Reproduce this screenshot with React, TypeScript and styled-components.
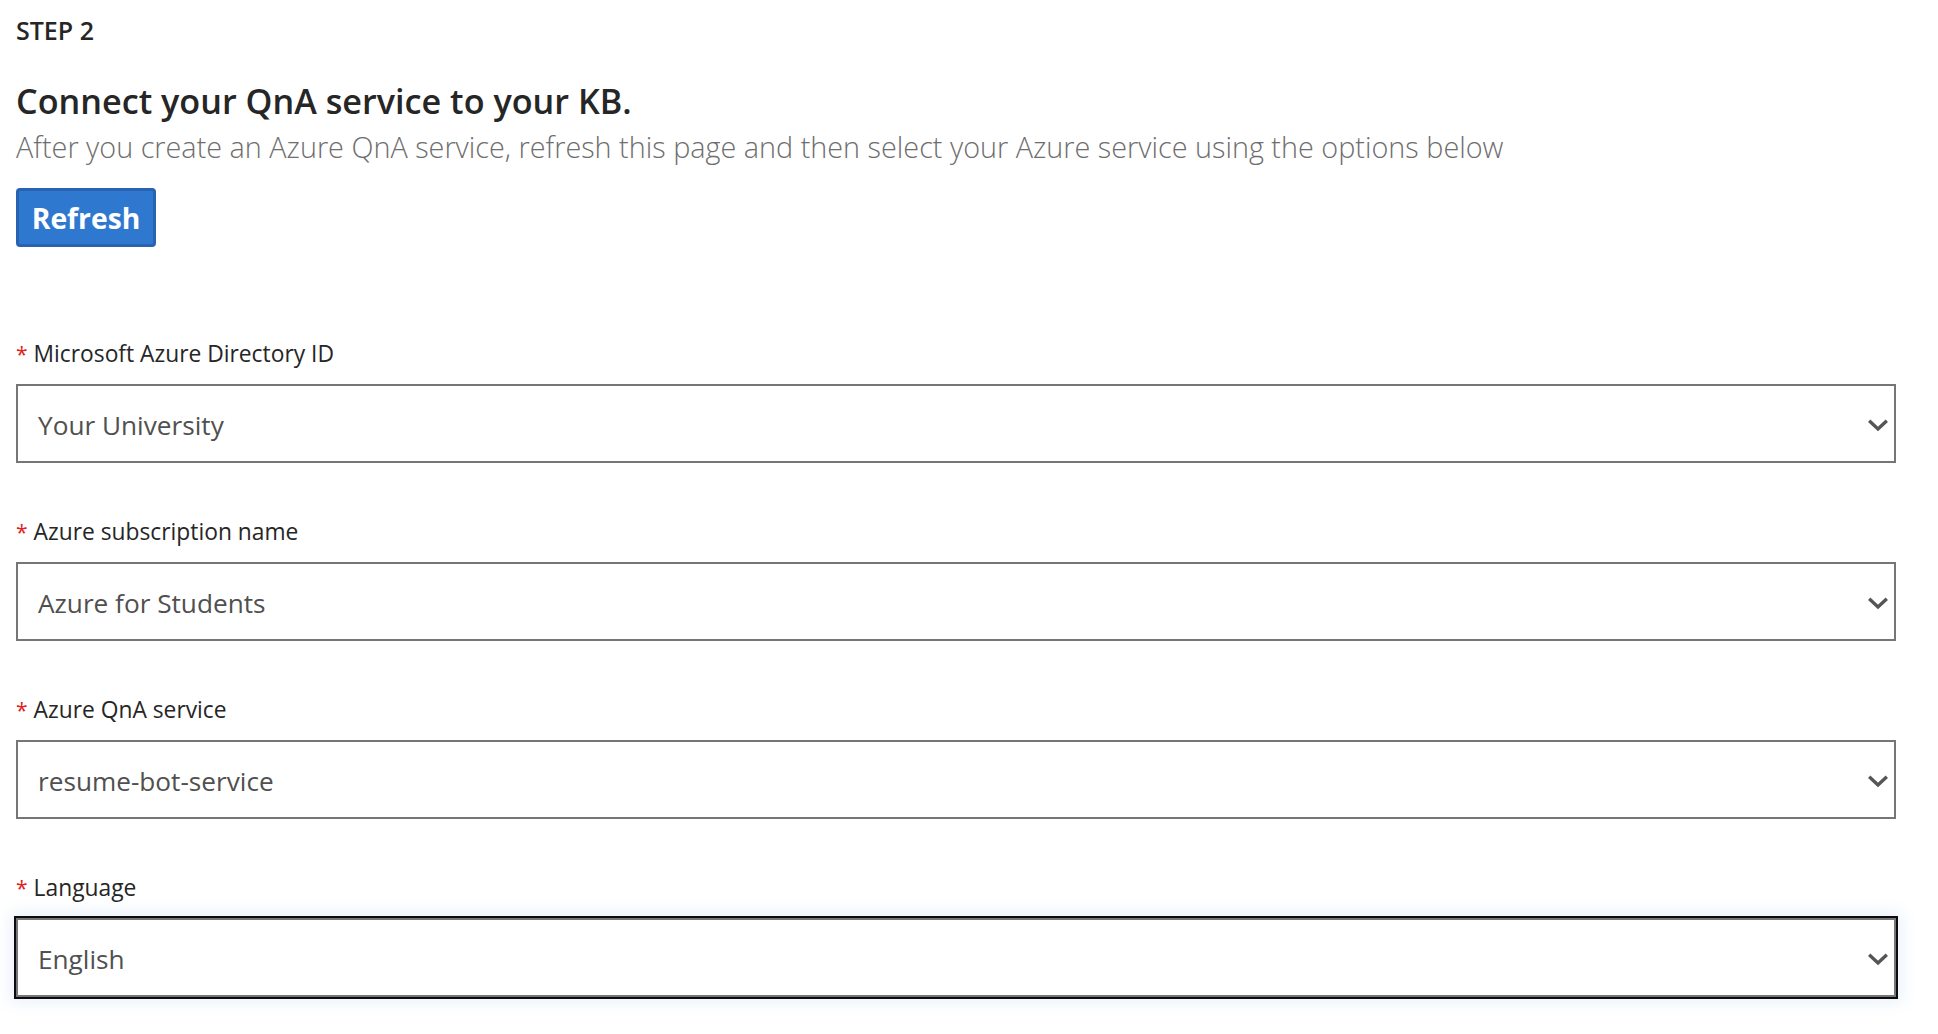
import React from "react";
import styled, { createGlobalStyle } from "styled-components";

const Global = createGlobalStyle`
  html, body { margin: 0; padding: 0; background: #ffffff; }
  body { font-family: "Open Sans", "Noto Sans", Arial, sans-serif; }
`;

const Page = styled.div`
  display: flex;
  flex-direction: column;
  padding: 14px 42px 40px 16px;
  color: #262626;
`;

const Step = styled.div`
  font-size: 25px;
  font-weight: 600;
  line-height: 32px;
  color: #262626;
`;

const Heading = styled.h1`
  margin: 33px 0 0;
  font-size: 34.2px;
  font-weight: 600;
  line-height: 44px;
  color: #262626;
`;

const Subtitle = styled.p`
  margin: 6px 0 0;
  font-size: 28.8px;
  font-weight: 300;
  line-height: 36px;
  color: #6e6e6e;
`;

const RefreshButton = styled.button`
  align-self: flex-start;
  margin-top: 23px;
  width: 140px;
  height: 59px;
  box-sizing: border-box;
  border: 3px solid #2763b0;
  border-radius: 4px;
  background: #2f78d0;
  color: #ffffff;
  font-family: "Open Sans", "Noto Sans", Arial, sans-serif;
  font-size: 28.3px;
  font-weight: 700;
  padding: 0;
  cursor: pointer;
`;

const Fields = styled.div`
  display: flex;
  flex-direction: column;
  gap: 53px;
  margin-top: 91px;
`;

const Field = styled.div`
  display: flex;
  flex-direction: column;
  gap: 14px;
`;

const Label = styled.label`
  display: flex;
  align-items: baseline;
  gap: 6px;
  font-size: 22.8px;
  line-height: 32px;
  color: #262626;
`;

const Required = styled.span`
  color: #e0201b;
  font-size: 21px;
`;

const SelectBox = styled.div<{ $focused?: boolean }>`
  display: flex;
  align-items: center;
  justify-content: space-between;
  height: 79px;
  box-sizing: border-box;
  border: 2px solid #767676;
  background: #ffffff;
  padding: 2px 6px 0 20px;
  box-shadow: ${(p) =>
    p.$focused
      ? "0 0 0 2px #0c0c0c, 0 0 14px 6px rgba(60, 130, 220, 0.10)"
      : "none"};
`;

const Value = styled.span`
  font-size: 26.2px;
  color: #505050;
`;

const Chevron = () => (
  <svg width="20" height="14" viewBox="0 0 20 14" aria-hidden="true">
    <path
      d="M1.2 2.8 L10 11 L18.8 2.8"
      fill="none"
      stroke="#555555"
      strokeWidth="3.4"
      strokeLinecap="butt"
      strokeLinejoin="miter"
    />
  </svg>
);

const fields = [
  { label: "Microsoft Azure Directory ID", value: "Your University" },
  { label: "Azure subscription name", value: "Azure for Students" },
  { label: "Azure QnA service", value: "resume-bot-service" },
  { label: "Language", value: "English", focused: true },
];

export default function App() {
  return (
    <>
      <Global />
      <Page>
        <Step>STEP 2</Step>
        <Heading>Connect your QnA service to your KB.</Heading>
        <Subtitle>
          After you create an Azure QnA service, refresh this page and then select your Azure
          service using the options below
        </Subtitle>
        <RefreshButton>Refresh</RefreshButton>
        <Fields>
          {fields.map((f) => (
            <Field key={f.label}>
              <Label>
                <Required>*</Required>
                {f.label}
              </Label>
              <SelectBox $focused={f.focused}>
                <Value>{f.value}</Value>
                <Chevron />
              </SelectBox>
            </Field>
          ))}
        </Fields>
      </Page>
    </>
  );
}
